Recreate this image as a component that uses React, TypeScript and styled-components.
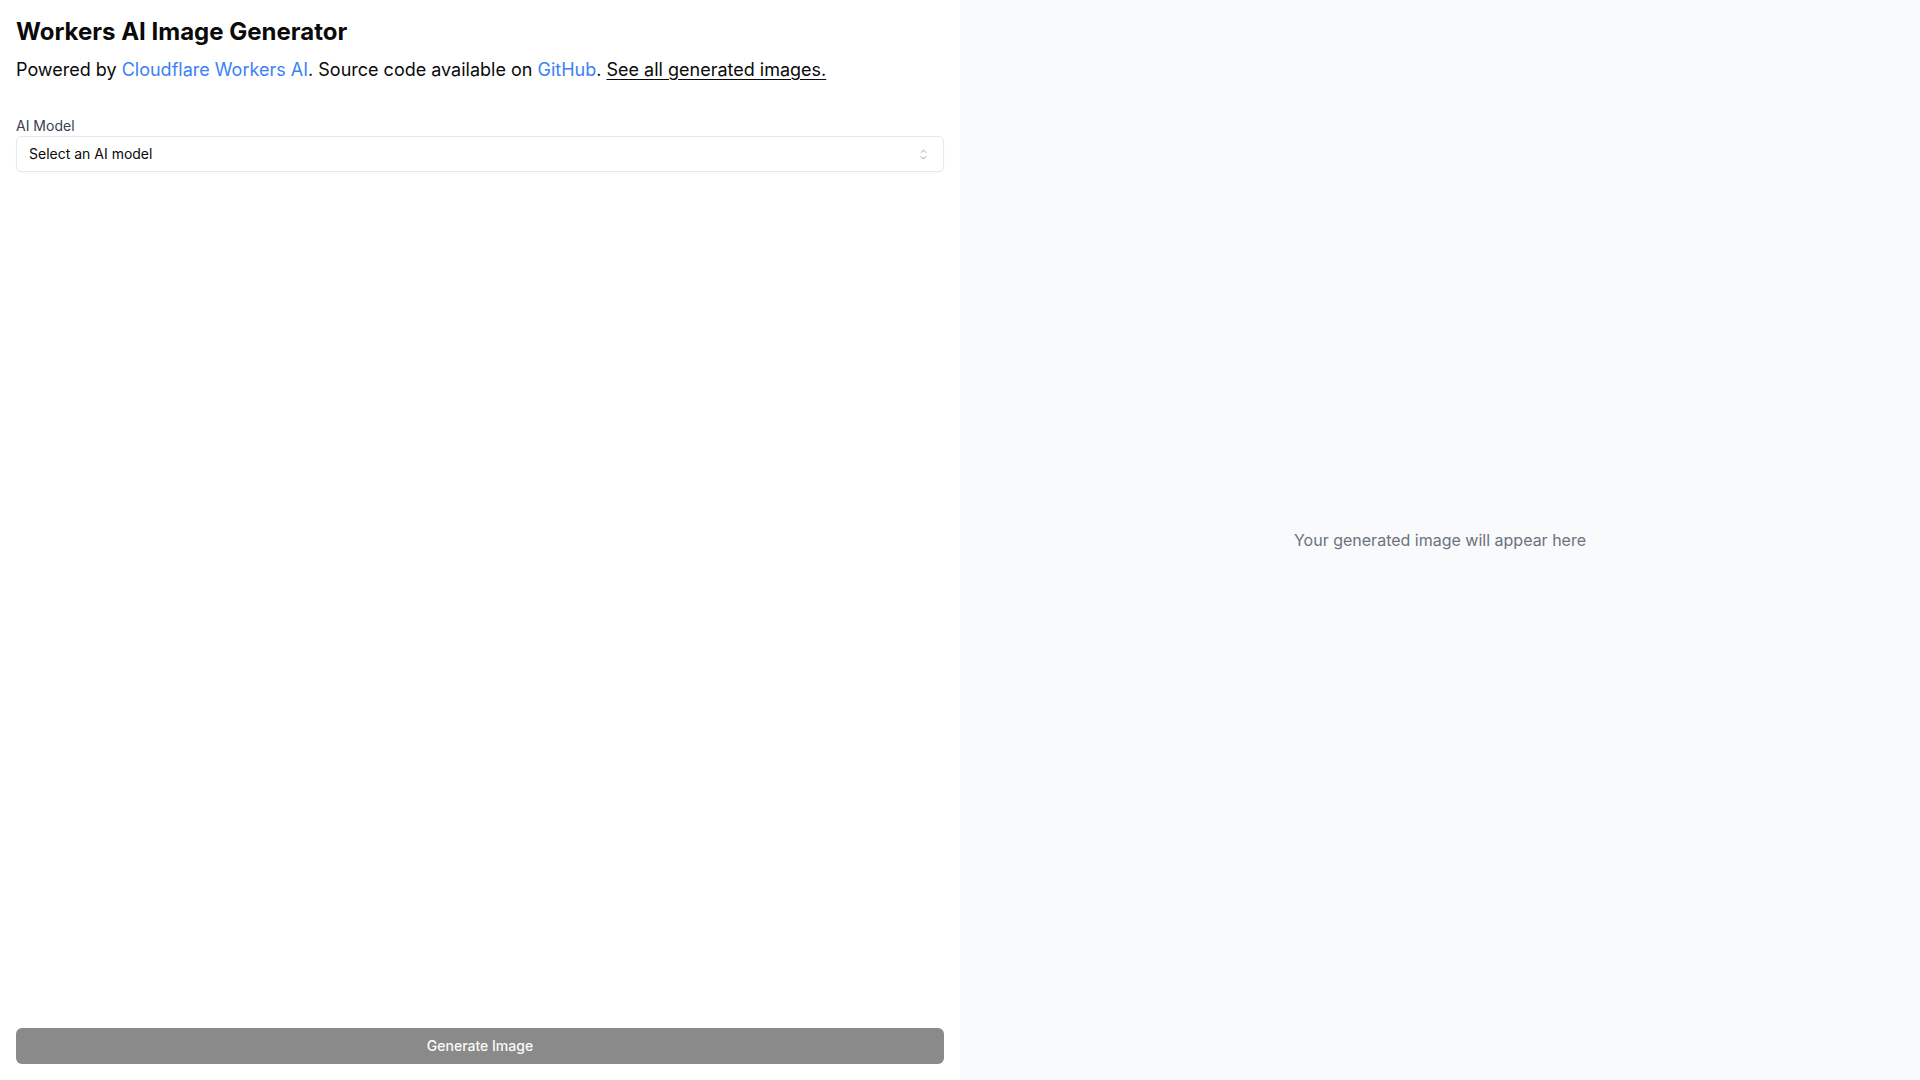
import React from "react"
import styled, {createGlobalStyle} from "styled-components"

const GlobalStyle = createGlobalStyle`
  html, body {
    margin: 0;
    padding: 0;
    height: 100%;
    background: #ffffff;
  }

  body {
    font-family: "Inter", "Liberation Sans", sans-serif;
    color: #0a0a0a;
    -webkit-font-smoothing: antialiased;
  }

  * {
    box-sizing: border-box;
  }
`

const Page = styled.div`
  display: flex;
  flex-direction: row;
  width: 100vw;
  height: 100vh;
`

const ControlsPanel = styled.section`
  display: flex;
  flex-direction: column;
  width: 50%;
  padding: 16px;
  background: #ffffff;
`

const PreviewPanel = styled.section`
  flex: 1;
  display: flex;
  align-items: center;
  justify-content: center;
  background: #f9fafb;
`

const Title = styled.h1`
  margin: 0;
  font-size: 24px;
  line-height: 32px;
  font-weight: 700;
  color: #0a0a0a;
`

const Intro = styled.p`
  margin: 8px 0 0;
  font-size: 18px;
  line-height: 28px;
  color: #0a0a0a;
`

const Link = styled.a<{ $plain?: boolean }>`
  color: ${p => p.$plain ? "#0a0a0a" : "#3b82f6"};
  text-decoration: ${p => p.$plain ? "underline" : "none"};
  text-underline-offset: 3px;
  cursor: pointer;
`

const Field = styled.div`
  display: flex;
  flex-direction: column;
  margin-top: 32px;
`

const Label = styled.label`
  font-size: 14px;
  line-height: 20px;
  font-weight: 400;
  color: #374151;
`

const SelectTrigger = styled.button`
  display: flex;
  align-items: center;
  justify-content: space-between;
  width: 100%;
  height: 36px;
  padding: 0 12px;
  border: 1px solid #e5e7eb;
  border-radius: 6px;
  background: #ffffff;
  box-shadow: 0 1px 2px rgba(0, 0, 0, 0.03);
  font-family: inherit;
  font-size: 14px;
  line-height: 20px;
  color: #0a0a0a;
  text-align: left;
  cursor: pointer;
`

const Spacer = styled.div`
  flex: 1;
`

const GenerateButton = styled.button`
  width: 100%;
  height: 36px;
  border: none;
  border-radius: 6px;
  background: #8a8a8a;
  color: #fafafa;
  font-family: inherit;
  font-size: 14px;
  line-height: 20px;
  font-weight: 500;
  cursor: not-allowed;
`

const Placeholder = styled.p`
  margin: 0;
  font-size: 16px;
  line-height: 24px;
  color: #6b7280;
`

const CaretSort = () => (
    <svg width="15" height="15" viewBox="0 0 15 15" fill="none">
        <path d="M5 5.5L7.5 3L10 5.5" stroke="#9ca3af" strokeWidth="1" strokeLinecap="round" strokeLinejoin="round"/>
        <path d="M5 9.5L7.5 12L10 9.5" stroke="#9ca3af" strokeWidth="1" strokeLinecap="round" strokeLinejoin="round"/>
    </svg>
)

export default function App() {
    return (<>
        <GlobalStyle/>
        <Page>
            <ControlsPanel>
                <Title>Workers AI Image Generator</Title>
                <Intro>
                    Powered by <Link>Cloudflare Workers AI</Link>. Source code available
                    on <Link>GitHub</Link>. <Link $plain>See all generated images.</Link>
                </Intro>
                <Field>
                    <Label>AI Model</Label>
                    <SelectTrigger>
                        <span>Select an AI model</span>
                        <CaretSort/>
                    </SelectTrigger>
                </Field>
                <Spacer/>
                <GenerateButton disabled>Generate Image</GenerateButton>
            </ControlsPanel>
            <PreviewPanel>
                <Placeholder>Your generated image will appear here</Placeholder>
            </PreviewPanel>
        </Page>
    </>)
}
